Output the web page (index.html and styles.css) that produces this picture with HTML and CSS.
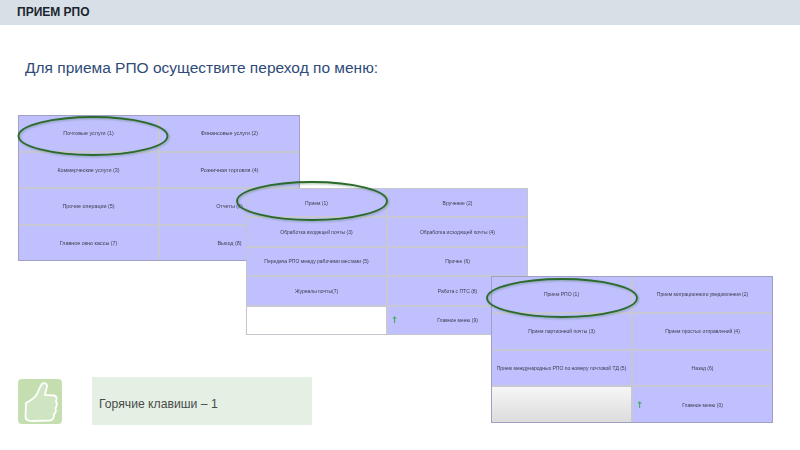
FILE: index.html
```html
<!DOCTYPE html>
<html lang="ru">
<head>
  <meta charset="UTF-8" />
  <title>Прием РПО</title>
  <link rel="stylesheet" href="styles.css">
</head>
<body>
  <header class="topbar">ПРИЕМ РПО</header>
  <h1 class="lead">Для приема РПО осуществите переход по меню:</h1>

  <div class="canvas">
    <div class="menu menu-one">
      <div class="cell">Почтовые услуги (1)</div>
      <div class="cell">Финансовые услуги (2)</div>
      <div class="cell">Коммерческие услуги (3)</div>
      <div class="cell">Розничная торговля (4)</div>
      <div class="cell">Прочие операции (5)</div>
      <div class="cell">Отчеты (6)</div>
      <div class="cell">Главное окно кассы (7)</div>
      <div class="cell">Выход (8)</div>
      <svg class="ring" width="156" height="46" viewBox="0 0 156 46"><ellipse cx="78" cy="23" rx="74.5" ry="19" /></svg>
    </div>

    <div class="menu menu-two">
      <div class="cell">Прием (1)</div>
      <div class="cell">Вручение (2)</div>
      <div class="cell">Обработка входящей почты (3)</div>
      <div class="cell">Обработка исходящей почты (4)</div>
      <div class="cell">Передача РПО между рабочими местами (5)</div>
      <div class="cell">Прочее (6)</div>
      <div class="cell">Журналы почты(7)</div>
      <div class="cell">Работа с ПТС (8)</div>
      <div class="cell cell-blank"></div>
      <div class="cell"><span class="arrow">↑</span>Главное меню (9)</div>
      <svg class="ring" width="156" height="46" viewBox="0 0 156 46"><ellipse cx="78" cy="23" rx="75" ry="19" /></svg>
    </div>

    <div class="menu menu-three">
      <div class="cell">Прием РПО (1)</div>
      <div class="cell">Прием миграционного уведомления (2)</div>
      <div class="cell">Прием партионной почты (3)</div>
      <div class="cell">Прием простых отправлений (4)</div>
      <div class="cell">Прием международных РПО по номеру почтовой ТД (5)</div>
      <div class="cell">Назад (6)</div>
      <div class="cell cell-grey"></div>
      <div class="cell"><span class="arrow">↑</span>Главное меню (0)</div>
      <svg class="ring" width="156" height="46" viewBox="0 0 156 46"><ellipse cx="78" cy="23" rx="75" ry="19" /></svg>
    </div>
  </div>

  <div class="hint">
    <div class="thumb">
      <svg width="45" height="45" viewBox="0 0 45 45">
        <path d="M8 24 C12 22 16 20 19 15 C21 11 22 7 24 5 C26 3.5 29 4 29 7 C29 10 27 13 27 16 L36 16.5 C39 17 39 20 38 22 C39 24 39 27 37.5 29 C38 31 38 34 36 35 C36.5 38 35 41 32 41.5 L14 42 C10 42 7.5 41 7.5 38 Z" />
      </svg>
    </div>
    <div class="hint-box">Горячие клавиши – 1</div>
  </div>
</body>
</html>
```

FILE: styles.css
```css
html, body {
  margin: 0;
  padding: 0;
}
body {
  width: 800px;
  height: 450px;
  overflow: hidden;
  background: #fff;
  font-family: "Liberation Sans", Arial, sans-serif;
  position: relative;
}
.topbar {
  height: 25px;
  line-height: 24px;
  padding-left: 17px;
  background: #d6e0e6;
  color: #1c2530;
  font-size: 12px;
  font-weight: bold;
}
.lead {
  margin: 33px 0 0 25px;
  font-size: 15.5px;
  line-height: 20px;
  font-weight: normal;
  color: #2f4a78;
}

/* menu screenshots overlap each other on a free canvas */
.canvas {
  position: absolute;
  left: 0;
  top: 0;
  width: 800px;
  height: 450px;
}
.menu {
  position: absolute;
  display: grid;
  grid-template-columns: 1fr 1fr;
  width: 282px;
  background: #c8c8d4;
  gap: 2px;
  box-sizing: border-box;
  border: 1px solid #a0a0c4;
  filter: blur(0.35px);
}
.menu-one {
  left: 18px;
  top: 115px;
  height: 146px;
  grid-template-rows: repeat(4, 1fr);
}
.menu-two {
  left: 246px;
  top: 188px;
  height: 147px;
  grid-template-rows: repeat(5, 1fr);
  border-color: #c4c4cc;
}
.menu-three {
  left: 491px;
  top: 276px;
  height: 147px;
  grid-template-rows: repeat(4, 1fr);
}
.cell {
  position: relative;
  display: flex;
  align-items: center;
  justify-content: center;
  background: #c0c0ff;
  color: #3c3c4c;
  font-size: 5.4px;
  white-space: nowrap;
}
.menu-two .cell,
.menu-three .cell {
  font-size: 5px;
}
.cell-blank {
  background: #fff;
}
.cell-grey {
  background: linear-gradient(#f6f6f6, #dcdcdc);
}
.menu .arrow {
  position: absolute;
  left: 3px;
  top: 50%;
  transform: translateY(-50%);
  color: #3fae4c;
  font-family: "DejaVu Sans", sans-serif;
  font-size: 9px;
  font-weight: bold;
}
.ring {
  position: absolute;
  overflow: visible;
  filter: drop-shadow(1px 1px 1px rgba(60, 110, 60, 0.45));
}
.ring ellipse {
  fill: none;
  stroke: #2a6a2a;
  stroke-width: 1.8;
}
.menu-one .ring {
  left: -4px;
  top: -3px;
}
.menu-two .ring {
  left: -13px;
  top: -11px;
}
.menu-three .ring {
  left: -8px;
  top: -2px;
}

.hint {
  position: absolute;
  left: 18px;
  top: 377px;
  display: flex;
  align-items: flex-start;
  gap: 30px;
}
.thumb {
  margin-top: 2px;
  width: 44px;
  height: 45px;
  border-radius: 4px;
  background: #c4deb0;
}
.thumb path {
  fill: #cfe4c0;
  stroke: #fff;
  stroke-width: 1.8;
}
.hint-box {
  width: 220px;
  height: 48px;
  box-sizing: border-box;
  padding: 19px 0 0 7px;
  background: #e4f0e4;
  color: #4a4a4a;
  font-size: 12.2px;
  line-height: 16px;
}
```
